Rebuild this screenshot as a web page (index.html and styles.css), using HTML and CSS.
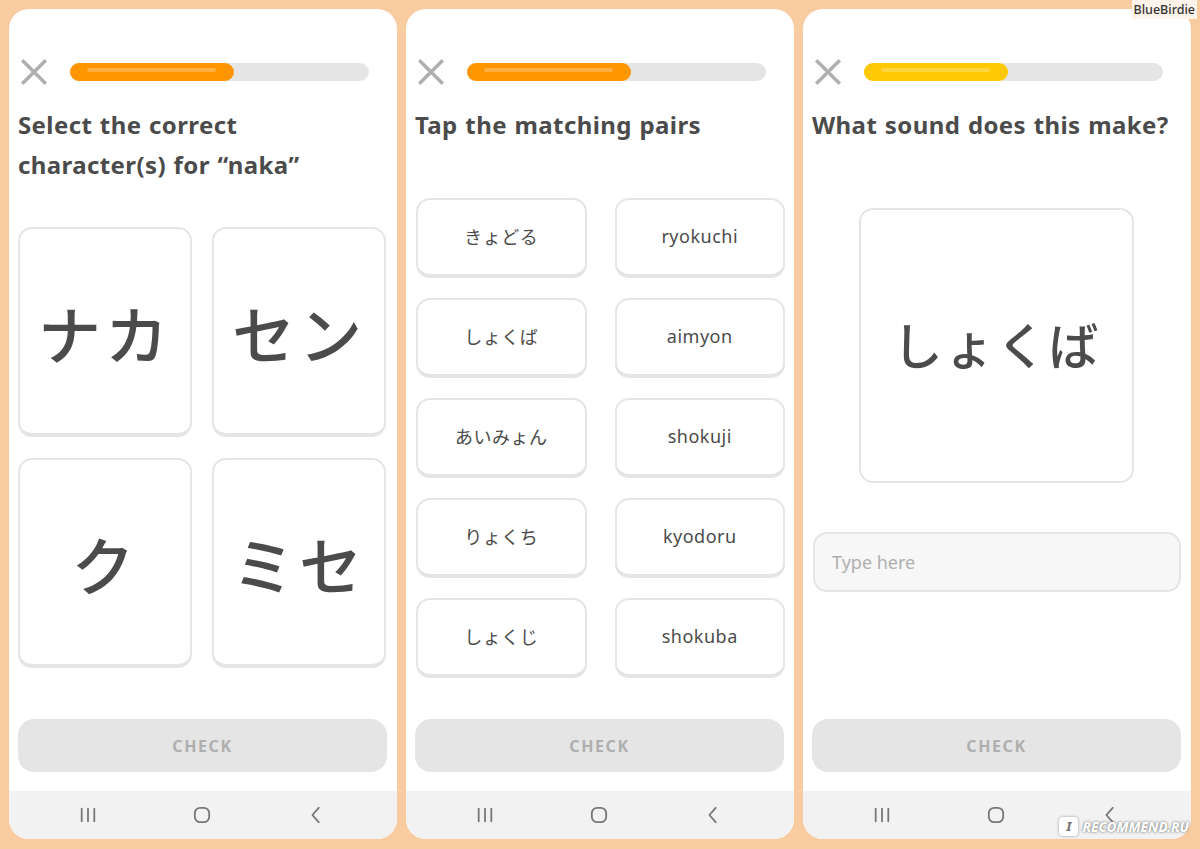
FILE: index.html
```html
<!DOCTYPE html>
<html lang="en">
<head>
<meta charset="UTF-8" />
<meta name="viewport" content="width=device-width, initial-scale=1" />
<title>Duolingo - Japanese lessons</title>
<link rel="stylesheet" href="styles.css">
</head>
<body>

<main class="screens">

  <!-- экран 1: выбор символов -->
  <section class="phone">
    <div class="lesson-top">
      <svg class="close" viewBox="0 0 28 28"><path d="M3 3 L25 25 M25 3 L3 25" /></svg>
      <div class="progress"><div class="fill orange" style="width:55%"><span class="shine"></span></div></div>
    </div>
    <h2 class="prompt">Select the correct character(s) for “naka”</h2>
    <div class="choices">
      <button class="choice">ナカ</button>
      <button class="choice">セン</button>
      <button class="choice">ク</button>
      <button class="choice">ミセ</button>
    </div>
    <button class="check">CHECK</button>
    <nav class="sysbar">
      <svg class="nav-ico" viewBox="0 0 20 16"><path d="M3 1 V15 M10 1 V15 M17 1 V15" /></svg>
      <svg class="nav-ico" viewBox="0 0 20 20"><rect x="2" y="2" width="16" height="16" rx="6" /></svg>
      <svg class="nav-ico" viewBox="0 0 20 20"><path d="M13 2 L6 10 L13 18" /></svg>
    </nav>
  </section>

  <!-- экран 2: пары -->
  <section class="phone">
    <div class="lesson-top">
      <svg class="close" viewBox="0 0 28 28"><path d="M3 3 L25 25 M25 3 L3 25" /></svg>
      <div class="progress"><div class="fill orange" style="width:55%"><span class="shine"></span></div></div>
    </div>
    <h2 class="prompt">Tap the matching pairs</h2>
    <div class="pairs">
      <button class="pair">きょどる</button>
      <button class="pair">ryokuchi</button>
      <button class="pair">しょくば</button>
      <button class="pair">aimyon</button>
      <button class="pair">あいみょん</button>
      <button class="pair">shokuji</button>
      <button class="pair">りょくち</button>
      <button class="pair">kyodoru</button>
      <button class="pair">しょくじ</button>
      <button class="pair">shokuba</button>
    </div>
    <button class="check">CHECK</button>
    <nav class="sysbar">
      <svg class="nav-ico" viewBox="0 0 20 16"><path d="M3 1 V15 M10 1 V15 M17 1 V15" /></svg>
      <svg class="nav-ico" viewBox="0 0 20 20"><rect x="2" y="2" width="16" height="16" rx="6" /></svg>
      <svg class="nav-ico" viewBox="0 0 20 20"><path d="M13 2 L6 10 L13 18" /></svg>
    </nav>
  </section>

  <!-- экран 3: ввод ответа -->
  <section class="phone">
    <div class="lesson-top">
      <svg class="close" viewBox="0 0 28 28"><path d="M3 3 L25 25 M25 3 L3 25" /></svg>
      <div class="progress"><div class="fill yellow" style="width:48%"><span class="shine"></span></div></div>
    </div>
    <h2 class="prompt">What sound does this make?</h2>
    <div class="sound-card">しょくば</div>
    <input class="answer" type="text" placeholder="Type here" />
    <button class="check">CHECK</button>
    <nav class="sysbar">
      <svg class="nav-ico" viewBox="0 0 20 16"><path d="M3 1 V15 M10 1 V15 M17 1 V15" /></svg>
      <svg class="nav-ico" viewBox="0 0 20 20"><rect x="2" y="2" width="16" height="16" rx="6" /></svg>
      <svg class="nav-ico" viewBox="0 0 20 20"><path d="M13 2 L6 10 L13 18" /></svg>
    </nav>
  </section>

</main>

<div class="author">BlueBirdie</div>
<div class="irec"><span class="irec-i">I</span>RECOMMEND.RU</div>

</body>
</html>
```

FILE: styles.css
```css
body { margin: 0; background: #f8cba0; font-family: "Noto Sans", "Noto Sans CJK JP", sans-serif; color: #4b4b4b; }
.screens { display: flex; gap: 9px; padding: 9px; }
.phone { width: 388px; height: 830px; background: #fff; border-radius: 20px; overflow: hidden; display: flex; flex-direction: column; box-sizing: border-box; padding: 0 10px 0 9px; }

.lesson-top { display: flex; align-items: center; height: 28px; margin-top: 49px; }
.close { width: 30px; height: 30px; margin-left: 1px; flex: none; }
.close path { stroke: #afafaf; stroke-width: 3.2; fill: none; }
.progress { flex: 1; height: 18px; margin-left: 21px; margin-right: 18px; background: #e5e5e5; border-radius: 9px; }
.fill { height: 100%; border-radius: 9px; position: relative; }
.fill.orange { background: #ff9600; }
.fill.yellow { background: #ffc800; }
.shine { position: absolute; left: 17px; right: 18px; top: 5px; height: 4px; border-radius: 2px; background: rgba(255, 255, 255, 0.25); }

.prompt { font-size: 24px; font-weight: 700; line-height: 40px; margin: 19px 0 0 0; letter-spacing: 0.4px; word-spacing: 1px; padding-right: 4px; }

.choices { display: grid; grid-template-columns: 1fr 1fr; gap: 21px 20px; margin-top: 42px; padding-right: 1px; }
.choice { height: 210px; background: #fff; border: 2px solid #e5e5e5; border-bottom-width: 4px; border-radius: 14px; font-family: "Noto Sans CJK JP", sans-serif; font-size: 63px; font-weight: 500; color: #4b4b4b; letter-spacing: 4px; padding: 0; }

.pairs { display: grid; grid-template-columns: 1fr 1fr; gap: 20px 28px; margin-top: 53px; margin-left: 1px; margin-right: -1px; }
.pair { height: 80px; background: #fff; border: 2px solid #e5e5e5; border-bottom-width: 4px; border-radius: 14px; font-family: "Noto Sans", "Noto Sans CJK JP", sans-serif; font-size: 18px; color: #4b4b4b; letter-spacing: 0.5px; padding: 0 0 2px; }

.sound-card { width: 275px; height: 275px; margin: 63px auto 0; box-sizing: border-box; border: 2px solid #e5e5e5; border-radius: 14px; display: flex; align-items: center; justify-content: center; font-family: "Noto Sans CJK JP", sans-serif; font-size: 50px; font-weight: 500; letter-spacing: 2px; padding-bottom: 6px; }
.answer { margin-top: 49px; height: 60px; box-sizing: border-box; border: 2px solid #e5e5e5; border-radius: 14px; background: #f7f7f7; padding: 0 17px; font-family: "Noto Sans", sans-serif; font-size: 18px; margin-left: 1px; }
.answer::placeholder { color: #afafaf; }

.check { margin-top: auto; margin-bottom: 19px; height: 53px; border: none; border-radius: 16px; background: #e5e5e5; color: #afafaf; font-family: "Noto Sans", sans-serif; font-weight: 700; font-size: 16px; letter-spacing: 1.6px; }

.sysbar { height: 48px; flex: none; margin: 0 -10px 0 -9px; background: #f2f2f2; display: flex; justify-content: space-between; align-items: center; padding: 0 72px 0 70px; }
.nav-ico { width: 18px; height: 18px; }
.nav-ico path, .nav-ico rect { stroke: #777; stroke-width: 2; fill: none; stroke-linecap: round; stroke-linejoin: round; }

.author { position: absolute; top: 0; right: 3px; padding: 1px 2px; background: #fdf3ea; font-family: "Noto Sans", sans-serif; font-size: 12.5px; font-weight: 500; color: #333; }
.irec { position: absolute; right: 11px; top: 817px; display: flex; align-items: center; gap: 4px; font-family: "Noto Sans", sans-serif; font-size: 13.5px; font-weight: 800; font-style: italic; color: #fff; text-shadow: 0 0 3px #888, 0 0 1px #666; }
.irec-i { width: 19px; height: 19px; background: #fff; border-radius: 4px; color: #777; text-shadow: none; display: flex; align-items: center; justify-content: center; font-size: 12px; box-shadow: 0 0 3px #999; }
```
